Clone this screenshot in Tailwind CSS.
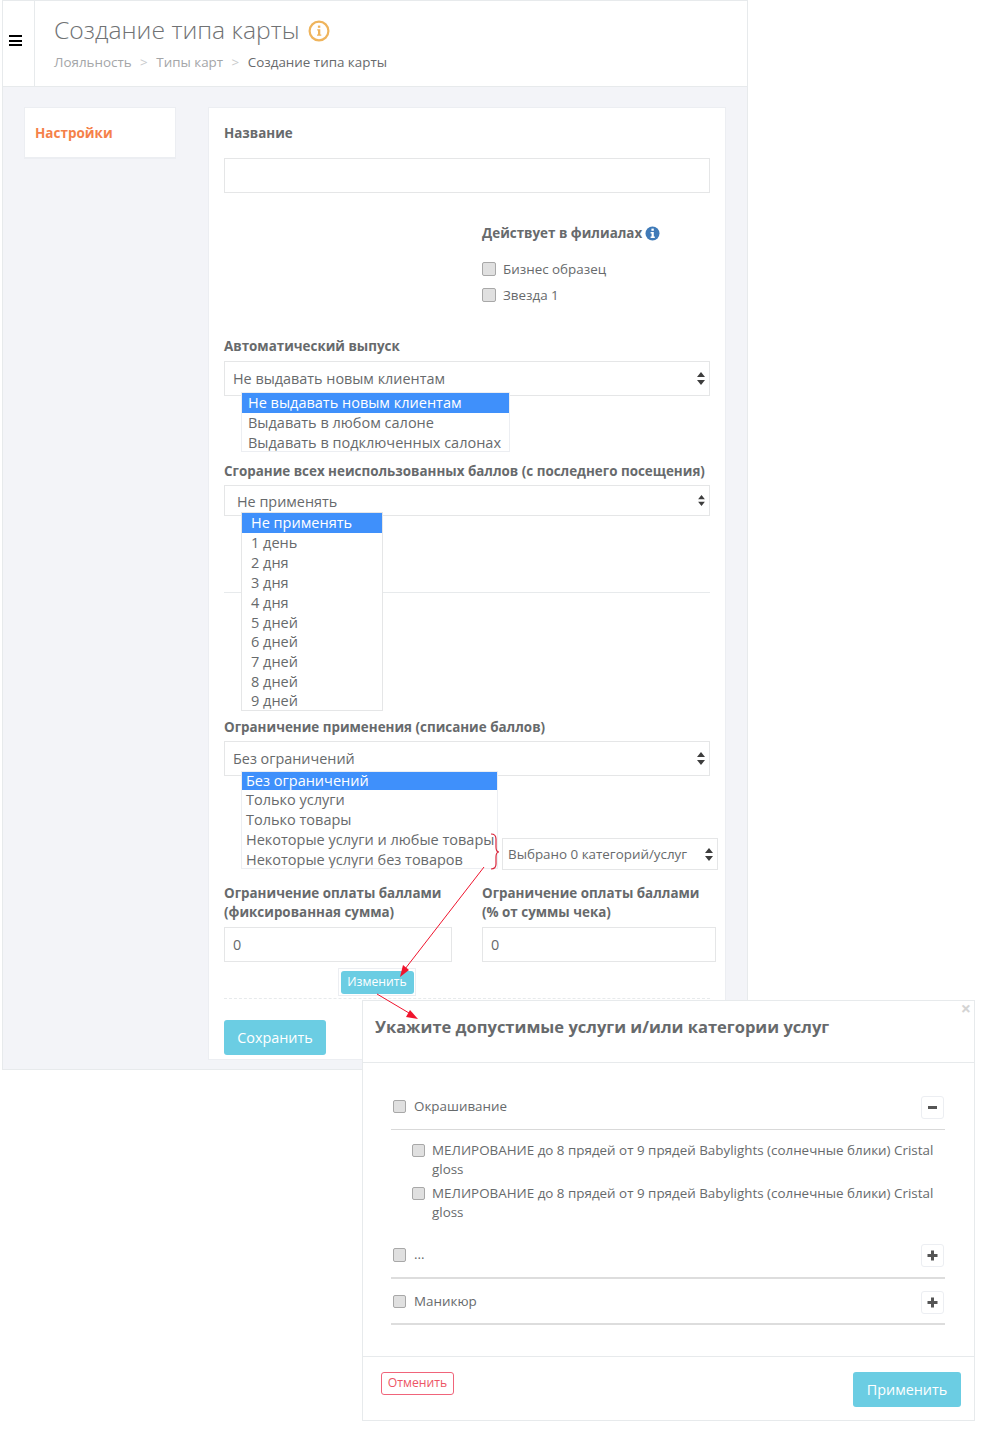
<!DOCTYPE html>
<html lang="en">
  <head>
    <meta charset="UTF-8" />
    <meta name="viewport" content="width=device-width, initial-scale=1.0" />
    <title>Создание типа карты</title>
    <script src="https://cdn.jsdelivr.net/npm/@tailwindcss/browser@4"></script>
  </head>
  <body class="bg-white font-['Open_Sans',sans-serif] text-[#676a6c]">
    <div class="relative w-[1000px] h-[1431px] overflow-hidden">
      <!-- app frame -->
      <div class="ml-[2px] w-[746px] h-[1070px] bg-[#f3f4f8] border border-[#e7eaec]">
        <div class="flex h-[86px] bg-white border-b border-[#e7eaec]">
          <div class="flex w-[32px] shrink-0 items-center justify-center border-r border-[#e7eaec]">
            <div class="flex flex-col gap-[2.5px] mt-[-6px] mr-[7px]">
              <span class="block w-[13px] h-[2px] bg-black"></span>
              <span class="block w-[13px] h-[2px] bg-black"></span>
              <span class="block w-[13px] h-[2px] bg-black"></span>
            </div>
          </div>
          <div class="pl-[19px] pt-[12px]">
            <div class="flex items-center gap-[8px]">
              <h1 class="text-[24.7px] leading-[34px] font-light text-[#707274]">Создание типа карты</h1>
              <svg width="22" height="22" viewBox="0 0 22 22" class="mt-[2px]">
                <circle cx="11" cy="11" r="9.4" fill="none" stroke="#efb45c" stroke-width="2.2" />
                <rect x="9.9" y="5.6" width="2.4" height="2.2" fill="#efb45c" />
                <path d="M9.2 9.2h3.1v5.2h1v1.4H9v-1.4h1v-3.8h-.8z" fill="#efb45c" />
              </svg>
            </div>
            <div class="flex mt-[5px] text-[13.4px] leading-[20px] text-[#a4a6a8]">
              <span>Лояльность</span>
              <span class="mx-[8.5px] text-[#c8cacc]">&gt;</span>
              <span>Типы карт</span>
              <span class="mx-[8.5px] text-[#c8cacc]">&gt;</span>
              <span class="text-[#676a6c]">Создание типа карты</span>
            </div>
          </div>
        </div>

        <div class="flex items-start pt-[20px] pl-[21px]">
          <div class="w-[152px] h-[52px] shrink-0 bg-white border border-[#eceef2] border-b-2 px-[10px] pt-[16px] text-[13.5px] leading-[19px] font-bold text-[#f5814a]">
            Настройки
          </div>

          <!-- main form card -->
          <div class="relative ml-[32px] w-[518px] h-[953px] bg-white border border-[#eceef2] px-[15px] pt-[16px]">
            <label class="block text-[13.4px] leading-[19px] font-bold">Название</label>
            <div class="mt-[15px] h-[35px] border border-[#e5e6e7]"></div>

            <div class="ml-[258px] mt-[31px]">
              <div class="flex items-center gap-[3px] text-[13.4px] leading-[19px] font-bold">
                Действует в филиалах
                <svg width="15" height="15" viewBox="0 0 15 15">
                  <circle cx="7.5" cy="7.5" r="7" fill="#3f7ab8" />
                  <rect x="6.4" y="2.6" width="2.4" height="2.2" fill="#fff" />
                  <path d="M5.6 6h3.2v4.6h1v1.4H5.6v-1.4h1V7.4h-1z" fill="#fff" />
                </svg>
              </div>
              <div class="flex items-center gap-[7px] mt-[16px] h-[20px] text-[13.4px]">
                <span class="w-[14px] h-[14px] rounded-[2px] bg-[#e0e0e0] border border-[#a8a8a8]"></span>Бизнес образец
              </div>
              <div class="flex items-center gap-[7px] mt-[6px] h-[20px] text-[13.4px]">
                <span class="w-[14px] h-[14px] rounded-[2px] bg-[#e0e0e0] border border-[#a8a8a8]"></span>Звезда 1
              </div>
            </div>

            <label class="block mt-[32px] text-[13.4px] leading-[19px] font-bold">Автоматический выпуск</label>
            <div class="relative mt-[5px] flex h-[35px] items-center justify-between border border-[#e5e6e7] pl-[8px] pr-[4px] text-[14.4px]">
              Не выдавать новым клиентам
              <svg width="8" height="13" viewBox="0 0 8 13"><path d="M4 0l4 5H0zM4 13l4-5H0z" fill="#3d3d3d" /></svg>
              <ul class="absolute left-[16px] top-[30px] z-10 w-[269px] h-[60px] overflow-hidden bg-white border border-[#eceef2] text-[14.5px] leading-[20px]">
                <li class="bg-[#3f90fb] pl-[6px] text-white">Не выдавать новым клиентам</li>
                <li class="pl-[6px]">Выдавать в любом салоне</li>
                <li class="pl-[6px]">Выдавать в подключенных салонах</li>
              </ul>
            </div>

            <label class="block mt-[66px] text-[13.4px] leading-[19px] font-bold whitespace-nowrap">Сгорание всех неиспользованных баллов (с последнего посещения)</label>
            <div class="relative mt-[4px] flex h-[31px] items-center justify-between border border-[#e5e6e7] pl-[12px] pr-[4px] text-[14.4px]">
              <span class="mt-[2px]">Не применять</span>
              <svg width="7" height="11" viewBox="0 0 8 13"><path d="M4 0l4 5H0zM4 13l4-5H0z" fill="#3d3d3d" /></svg>
              <ul class="absolute left-[16px] top-[26px] z-10 w-[142px] h-[199px] overflow-hidden bg-white border border-[#e5e6e7] text-[14.5px] leading-[19.9px]">
                <li class="bg-[#3f90fb] pl-[9px] text-white">Не применять</li>
                <li class="pl-[9px]">1 день</li>
                <li class="pl-[9px]">2 дня</li>
                <li class="pl-[9px]">3 дня</li>
                <li class="pl-[9px]">4 дня</li>
                <li class="pl-[9px]">5 дней</li>
                <li class="pl-[9px]">6 дней</li>
                <li class="pl-[9px]">7 дней</li>
                <li class="pl-[9px]">8 дней</li>
                <li class="pl-[9px] leading-[17px]">9 дней</li>
              </ul>
            </div>
            <div class="mt-[76px] border-t border-[#e7eaec]"></div>

            <label class="block mt-[125px] text-[13.4px] leading-[19px] font-bold">Ограничение применения (списание баллов)</label>
            <div class="relative mt-[4px] flex h-[35px] items-center justify-between border border-[#e5e6e7] pl-[8px] pr-[4px] text-[14.4px]">
              Без ограничений
              <svg width="8" height="13" viewBox="0 0 8 13"><path d="M4 0l4 5H0zM4 13l4-5H0z" fill="#3d3d3d" /></svg>
              <ul class="absolute left-[16px] top-[29px] z-10 w-[257px] h-[98px] overflow-hidden bg-white border border-[#eceef2] text-[14.5px] leading-[20px]">
                <li class="h-[18px] leading-[17px] bg-[#3f90fb] pl-[4px] text-white">Без ограничений</li>
                <li class="pl-[4px]">Только услуги</li>
                <li class="pl-[4px]">Только товары</li>
                <li class="pl-[4px] whitespace-nowrap">Некоторые услуги и любые товары</li>
                <li class="pl-[4px]">Некоторые услуги без товаров</li>
              </ul>
              <div class="absolute left-[277px] top-[96px] flex h-[32px] w-[216px] items-center justify-between border border-[#e5e6e7] bg-white pl-[5px] pr-[4px] text-[13.4px]">
                Выбрано 0 категорий/услуг
                <svg width="8" height="13" viewBox="0 0 8 13"><path d="M4 0l4 5H0zM4 13l4-5H0z" fill="#3d3d3d" /></svg>
              </div>
            </div>

            <div class="flex mt-[108px] w-[500px]">
              <div class="w-[228px] shrink-0">
                <label class="block text-[13.4px] leading-[19px] font-bold">Ограничение оплаты баллами<br />(фиксированная сумма)</label>
                <div class="mt-[5px] flex h-[35px] items-center border border-[#e5e6e7] pl-[8px] text-[14.4px]">0</div>
              </div>
              <div class="ml-[30px] w-[234px] shrink-0">
                <label class="block text-[13.4px] leading-[19px] font-bold whitespace-nowrap">Ограничение оплаты баллами<br />(% от суммы чека)</label>
                <div class="mt-[5px] flex h-[35px] items-center border border-[#e5e6e7] pl-[8px] text-[14.4px]">0</div>
              </div>
            </div>

            <div class="relative mt-[6px] h-[30px]">
              <div class="absolute left-[114px] top-0 flex h-[28px] w-[78px] items-center justify-center border border-[#eceef2] bg-white">
                <button class="h-[23px] w-[73px] rounded-[3px] bg-[#6bcde3] text-[12.2px] text-white">Изменить</button>
              </div>
            </div>
            <div class="border-t border-dashed border-[#e7eaec]"></div>
            <button class="mt-[21px] h-[35px] w-[102px] rounded-[3px] bg-[#6bcde3] text-[14.4px] text-white">Сохранить</button>
          </div>
        </div>
      </div>

      <!-- modal laid over the page -->
      <div class="absolute left-[362px] top-[1000px] z-20 w-[613px] h-[421px] bg-white border border-[#e7eaec]">
        <span class="absolute right-[3px] top-[-3px] text-[18px] leading-[20px] font-bold text-[#d4d4d4]">×</span>
        <div class="h-[62px] border-b border-[#e7eaec] pl-[12px] pt-[14px] text-[16.5px] leading-[24px] font-bold">
          Укажите допустимые услуги и/или категории услуг
        </div>
        <div class="h-[293px] pl-[28px] pr-[29px] pt-[27px] text-[13.4px]">
          <div class="flex h-[40px] items-start justify-between border-b border-[#d9d9d9]">
            <div class="flex items-center gap-[8px] h-[33px] pl-[2px]">
              <span class="w-[13px] h-[13px] rounded-[2px] bg-[#e0e0e0] border border-[#a8a8a8]"></span>Окрашивание
            </div>
            <span class="mt-[6px] mr-[1px] flex h-[23px] w-[23px] items-center justify-center rounded-[3px] border border-[#eceef2]">
              <span class="block w-[9px] h-[3px] bg-[#555]"></span>
            </span>
          </div>
          <div class="pt-[11px] pl-[21px]">
            <div class="flex gap-[7px] leading-[19px]">
              <span class="mt-[3px] shrink-0 w-[13px] h-[13px] rounded-[2px] bg-[#e0e0e0] border border-[#a8a8a8]"></span>
              <span>МЕЛИРОВАНИЕ до 8 прядей от 9 прядей Babylights (солнечные блики) Cristal gloss</span>
            </div>
            <div class="flex gap-[7px] mt-[5px] leading-[19px]">
              <span class="mt-[3px] shrink-0 w-[13px] h-[13px] rounded-[2px] bg-[#e0e0e0] border border-[#a8a8a8]"></span>
              <span>МЕЛИРОВАНИЕ до 8 прядей от 9 прядей Babylights (солнечные блики) Cristal gloss</span>
            </div>
          </div>
          <div class="flex mt-[16px] h-[41px] items-start justify-between border-b-2 border-[#dddddd]">
            <div class="flex items-center gap-[8px] h-[33px] pl-[2px]">
              <span class="w-[13px] h-[14px] rounded-[2px] bg-[#e0e0e0] border border-[#a8a8a8]"></span>...
            </div>
            <span class="mt-[6px] mr-[1px] flex h-[23px] w-[23px] items-center justify-center rounded-[3px] border border-[#eceef2]">
              <svg width="11" height="11" viewBox="0 0 11 11"><path d="M4 0.5h3v3.5h3.5v3H7v3.5H4V7H0.5V4H4z" fill="#555" /></svg>
            </span>
          </div>
          <div class="flex h-[46px] items-start justify-between border-b-2 border-[#dddddd]">
            <div class="flex items-center gap-[8px] h-[45px] pl-[2px]">
              <span class="w-[13px] h-[13px] rounded-[2px] bg-[#e0e0e0] border border-[#a8a8a8]"></span>Маникюр
            </div>
            <span class="mt-[12px] mr-[1px] flex h-[23px] w-[23px] items-center justify-center rounded-[3px] border border-[#eceef2]">
              <svg width="11" height="11" viewBox="0 0 11 11"><path d="M4 0.5h3v3.5h3.5v3H7v3.5H4V7H0.5V4H4z" fill="#555" /></svg>
            </span>
          </div>
        </div>
        <div class="flex items-start justify-between border-t border-[#e7eaec] pl-[18px] pr-[13px] pt-[15px]">
          <button class="h-[23px] w-[73px] rounded-[3px] border border-[#f0647a] text-[12.2px] text-[#ed5565]">Отменить</button>
          <button class="h-[35px] w-[108px] rounded-[3px] bg-[#6bcde3] text-[14.4px] text-white">Применить</button>
        </div>
      </div>

      <!-- red annotations -->
      <svg class="absolute left-0 top-0 z-30" width="1000" height="1431" viewBox="0 0 1000 1431">
        <path d="M491 834q5 0 5 5v8q0 5 3 5q-3 0-3 5v7q0 5-5 5" fill="none" stroke="#d9253a" stroke-width="1.2" />
        <path d="M484 867L405 969" stroke="#f0142d" stroke-width="1" />
        <path d="M400 977l3-12 6 5z" fill="#f0142d" />
        <path d="M377 994l32 19" stroke="#f0142d" stroke-width="1" />
        <path d="M418 1019l-12-2 4-7z" fill="#f0142d" />
      </svg>
    </div>
  </body>
</html>
